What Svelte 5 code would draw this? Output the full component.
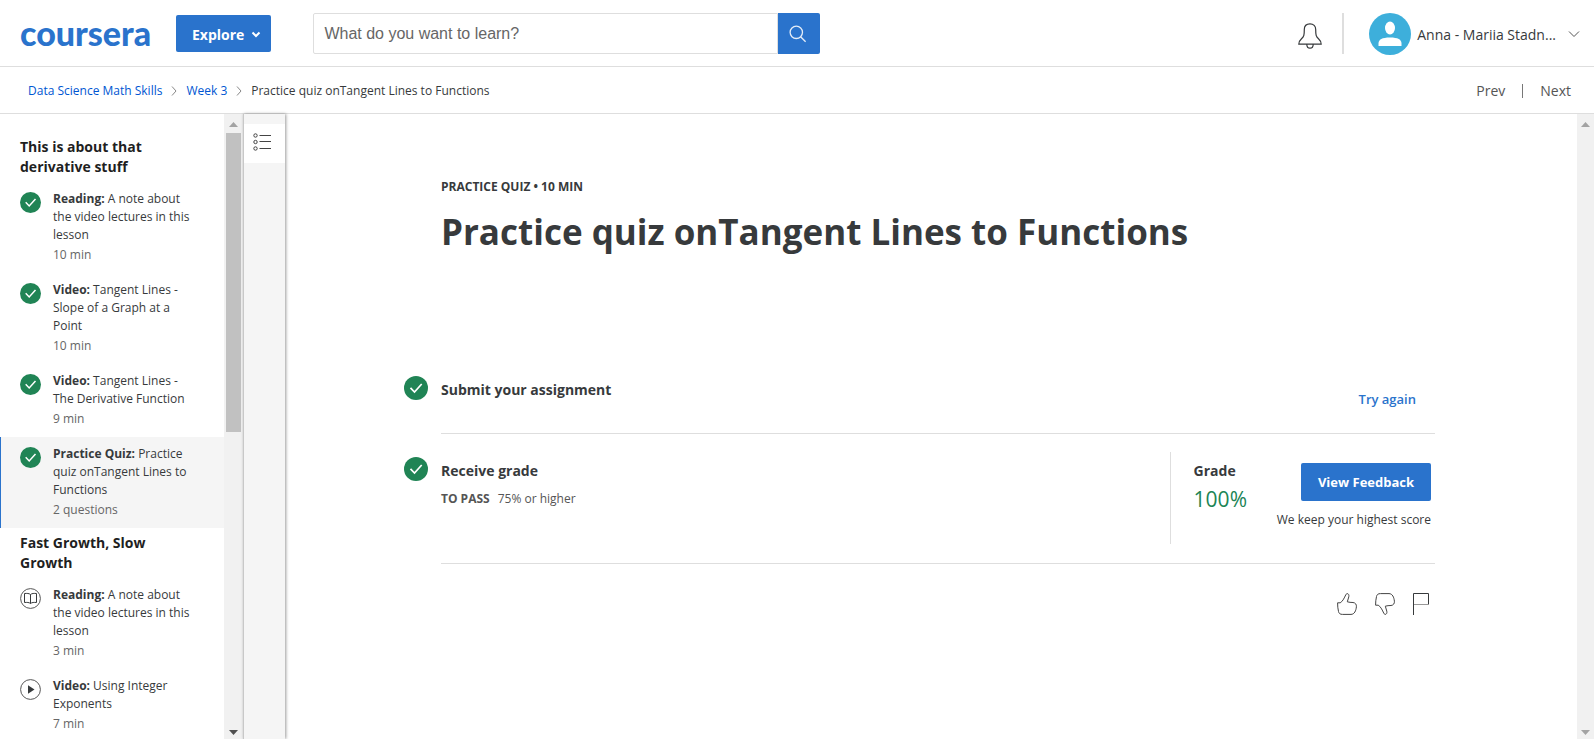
<script>
  const sections = [
    {
      title: 'This is about that derivative stuff',
      items: [
        { kind: 'Reading:', name: 'A note about the video lectures in this lesson', meta: '10 min', icon: 'done' },
        { kind: 'Video:', name: 'Tangent Lines - Slope of a Graph at a Point', meta: '10 min', icon: 'done' },
        { kind: 'Video:', name: 'Tangent Lines - The Derivative Function', meta: '9 min', icon: 'done' },
        { kind: 'Practice Quiz:', name: 'Practice quiz onTangent Lines to Functions', meta: '2 questions', icon: 'done', active: true }
      ]
    },
    {
      title: 'Fast Growth, Slow Growth',
      items: [
        { kind: 'Reading:', name: 'A note about the video lectures in this lesson', meta: '3 min', icon: 'book' },
        { kind: 'Video:', name: 'Using Integer Exponents', meta: '7 min', icon: 'play' }
      ]
    }
  ];
</script>

{#snippet check(size)}
  <svg class="check" width={size} height={size} viewBox="0 0 24 24" aria-hidden="true">
    <circle cx="12" cy="12" r="12" fill="#208455" />
    <path d="M6.5 11.8l4 4.2 7.2-8" fill="none" stroke="#fff" stroke-width="1.7" />
  </svg>
{/snippet}

<div class="page">
  <header class="top">
    <a class="logo" href="#home">coursera</a>
    <button class="explore">Explore
      <svg width="10" height="7" viewBox="0 0 10 7" aria-hidden="true"><path d="M1.5 1.5L5 5l3.5-3.5" fill="none" stroke="#fff" stroke-width="2" /></svg>
    </button>
    <form class="search" role="search">
      <input type="text" aria-label="Search" placeholder="What do you want to learn?" />
      <button type="button" aria-label="Submit search">
        <svg width="18" height="18" viewBox="0 0 18 18" aria-hidden="true"><g fill="none" stroke="#e4edf8" stroke-width="1.3"><circle cx="7.3" cy="7.3" r="6.2" /><path d="M11.6 11.8l5 5" /></g></svg>
      </button>
    </form>
    <div class="account">
      <button class="plain bell" aria-label="Notifications">
        <svg width="24" height="26" viewBox="0 0 24 26" aria-hidden="true"><path d="M12 .8C8.500.8 6.300 3 6.300 6.500C6.300 12 6 13.500 3.500 15.800C1.500 17.600.8 19 .8 21.200H23.200C23.200 19 22.500 17.600 20.500 15.800C18 13.500 17.700 12 17.700 6.500C17.700 3 15.500.8 12 .8ZM8.800 21.200C8.800 26.500 15.200 26.500 15.200 21.200" fill="none" stroke="#373a3c" stroke-width="1.2" /></svg>
      </button>
      <button class="plain user">
        <svg width="42" height="42" viewBox="0 0 42 42" aria-hidden="true"><circle cx="21" cy="21" r="21" fill="#3dafdb" /><ellipse cx="21" cy="15" rx="5" ry="6.500" fill="#fff" /><path d="M9.500 33V30.500C9.500 26.500 13 24.500 21 24.500S32.500 26.500 32.500 30.500V33Z" fill="#fff" /></svg>
        <span>Anna - Mariia Stadn...</span>
        <svg width="12" height="8" viewBox="0 0 12 8" aria-hidden="true"><path d="M1 1.500l5 5 5-5" fill="none" stroke="#555" /></svg>
      </button>
    </div>
  </header>

  <div class="crumbs">
    <nav aria-label="Breadcrumb">
      <a href="#course">Data Science Math Skills</a>
      <svg width="6" height="10" viewBox="0 0 6 10" aria-hidden="true"><path d="M1 .5L5 5 1 9.500" fill="none" stroke="#888" /></svg>
      <a href="#week">Week 3</a>
      <svg width="6" height="10" viewBox="0 0 6 10" aria-hidden="true"><path d="M1 .5L5 5 1 9.500" fill="none" stroke="#888" /></svg>
      <span>Practice quiz onTangent Lines to Functions</span>
    </nav>
    <div class="pager"><a href="#prev">Prev</a><i></i><a href="#next">Next</a></div>
  </div>

  <div class="body">
    <aside>
      {#each sections as section}
        <h2>{section.title}</h2>
        <ul>
          {#each section.items as item}
            <li class:active={item.active}>
              <a href="#item">
                {#if item.icon === 'done'}
                  {@render check(21)}
                {:else}
                  <svg class="check" width="21" height="21" viewBox="0 0 21 21" aria-hidden="true">
                    <circle cx="10.500" cy="10.500" r="9.900" fill="#fff" stroke="#555" />
                    {#if item.icon === 'book'}
                      <path d="M10.500 6.500C9 5.300 7 5.300 4.500 5.500V14.500C7 14.300 9 14.300 10.500 15.500C12 14.300 14 14.300 16.500 14.500V5.500C14 5.300 12 5.300 10.500 6.500V15.500" fill="none" stroke="#373a3c" />
                    {:else}
                      <path d="M8 6.300V14.700L14.500 10.500Z" fill="#373a3c" />
                    {/if}
                  </svg>
                {/if}
                <div>
                  <p><b>{item.kind}</b> {item.name}</p>
                  <p class="meta">{item.meta}</p>
                </div>
              </a>
            </li>
          {/each}
        </ul>
      {/each}
    </aside>
    <div class="bar side" aria-hidden="true">
      <svg width="9" height="5" viewBox="0 0 9 5"><path d="M0 5L4.500 0 9 5Z" fill="#a3a3a3" /></svg>
      <div class="track"><div class="thumb"></div></div>
      <svg width="9" height="5" viewBox="0 0 9 5"><path d="M0 0L4.500 5 9 0Z" fill="#505050" /></svg>
    </div>
    <div class="rail">
      <button class="plain" aria-label="Toggle outline">
        <svg width="18" height="18" viewBox="0 0 18 18" aria-hidden="true"><g fill="none" stroke="#444"><circle cx="2.500" cy="2.500" r="1.700" /><circle cx="2.500" cy="9" r="1.700" /><circle cx="2.500" cy="15.500" r="1.700" /><path d="M6.500 2.500H18M6.500 8.500H18M6.500 15.500H18" /></g></svg>
      </button>
    </div>
    <main>
      <p class="kicker">PRACTICE QUIZ • 10 MIN</p>
      <h1>Practice quiz onTangent Lines to Functions</h1>
      <section class="step">
        {@render check(24)}
        <div class="cell submit">
          <h3>Submit your assignment</h3>
          <button class="plain again">Try again</button>
        </div>
      </section>
      <section class="step second">
        {@render check(24)}
        <div class="cell receive">
          <div class="info">
            <h3>Receive grade</h3>
            <p class="pass"><b>TO PASS</b><span>75% or higher</span></p>
          </div>
          <div class="grade">
            <div class="info">
              <h3>Grade</h3>
              <p class="score">100%</p>
            </div>
            <div class="feedback">
              <button>View Feedback</button>
              <p>We keep your highest score</p>
            </div>
          </div>
        </div>
      </section>
      <div class="actions">
        <button class="plain" aria-label="Like"><svg width="20" height="22" viewBox="0 0 20 22" aria-hidden="true"><path d="M.6 9.800H3.200C5.500 8.500 7 5.500 8.200 3C9 1.200 9.500.6 10.200.6C11.500.6 12.200 2 11.800 3.800L10.300 8.800C12 9.500 14 9.300 16 9.500C18.500 9.800 19.600 11.500 19.400 13.800C19 17.500 17.500 21.400 14 21.400H5.500C3 21.400 2 20.500 1.500 18.500C.8 15.500.6 13 .6 9.800Z" fill="none" stroke="#444" /></svg></button>
        <button class="plain" aria-label="Dislike"><svg width="20" height="22" viewBox="0 0 20 22" aria-hidden="true"><path d="M.6 12.200H3.200C5.500 13.500 7 16.500 8.200 19C9 20.800 9.500 21.400 10.200 21.400C11.500 21.400 12.200 20 11.800 18.200L10.300 13.200C12 12.500 14 12.700 16 12.500C18.500 12.200 19.600 10.500 19.400 8.200C19 4.500 17.500.6 14 .6H5.500C3 .6 2 1.500 1.500 3.500C.8 6.500.6 9 .6 12.200Z" fill="none" stroke="#444" /></svg></button>
        <button class="plain" aria-label="Flag"><svg width="16" height="22" viewBox="0 0 16 22" aria-hidden="true"><path d="M.5 22V.5H15.500V11.500" fill="none" stroke="#373a3c" /><path d="M1 11.500H16" stroke="#999" /></svg></button>
      </div>
    </main>
    <div class="bar" aria-hidden="true">
      <svg width="9" height="5" viewBox="0 0 9 5"><path d="M0 5L4.500 0 9 5Z" fill="#a3a3a3" /></svg>
      <div class="track"></div>
      <svg width="9" height="5" viewBox="0 0 9 5"><path d="M0 0L4.500 5 9 0Z" fill="#a3a3a3" /></svg>
    </div>
  </div>
</div>

<style>
  :global(body) { margin: 0; background: #fff; }
  * { box-sizing: border-box; }
  h1, h2, h3, p, ul { margin: 0; padding: 0; }
  ul { list-style: none; }
  a { color: inherit; text-decoration: none; }
  svg { flex: none; display: block; }
  button { font: inherit; border: 0; cursor: pointer; }
  .plain { background: none; padding: 0; color: inherit; }
  .page { height: 100vh; display: flex; flex-direction: column; font-family: "Open Sans", "Noto Sans", sans-serif; font-size: 12px; line-height: 18px; color: #373a3c; overflow: hidden; }
  .top { flex: none; height: 67px; border-bottom: 1px solid #dedede; display: flex; align-items: center; padding: 1px 14px 0 20px; }
  .logo { width: 132px; margin-right: 24px; padding-bottom: 2px; color: #2a73cc; font: 900 34px/40px Lato, sans-serif; }
  .explore { height: 37px; padding: 2px 10px 0 16px; display: flex; align-items: center; gap: 7px; background: #2a73cc; color: #fff; border-radius: 2px; font-size: 14px; font-weight: 700; }
  .search { display: flex; width: 507px; height: 41px; margin-left: 42px; }
  .search input { flex: 1; min-width: 0; border: 1px solid #dedede; border-radius: 2px 0 0 2px; padding: 0 10px; font: 16px "Liberation Sans", sans-serif; }
  .search input::placeholder { color: #666; opacity: 1; }
  .search button { width: 42px; padding: 0 0 0 11px; background: #2a73cc; border-radius: 0 2px 2px 0; }
  .account { margin-left: auto; display: flex; align-items: center; }
  .bell { padding: 5px 20px 0 0; }
  .user { display: flex; align-items: center; border-left: 2px solid #dedede; padding-left: 25px; font-size: 14px; height: 41px; }
  .user span { margin: 0 12px 0 6px; padding-top: 2px; }
  .crumbs { flex: none; height: 47px; border-bottom: 1px solid #dedede; display: flex; justify-content: space-between; align-items: center; padding: 1px 23px 0 28px; }
  nav { display: flex; align-items: center; gap: 9px; }
  nav a { color: #0056d2; }
  .pager { display: flex; align-items: center; font-size: 14px; color: #555; }
  .pager i { width: 1px; height: 14px; background: #777; margin: 0 17px; }
  .body { flex: 1; min-height: 0; display: flex; }
  aside { flex: none; width: 224px; padding-top: 18px; overflow: hidden; }
  h2 { font-size: 14px; line-height: 20px; padding: 5px 40px 5px 20px; color: #1f1f1f; }
  li a { display: flex; gap: 12px; padding: 8px 28px 9px 20px; }
  li :global(.check) { margin-top: 2px; }
  li.active { background: #f5f5f5; box-shadow: inset 1px 0 #2a73cc; }
  .meta { margin-top: 2px; color: #666; }
  .bar { flex: none; width: 17px; background: #f1f1f1; display: flex; flex-direction: column; align-items: center; padding: 8px 0 4px; }
  .side { width: 19px; }
  .track { flex: 1; width: 15px; padding-top: 6px; }
  .thumb { height: 50%; background: #c1c1c1; }
  .rail { flex: none; width: 42px; background: #f5f5f5; border-left: 1px solid #c8c8c8; padding-top: 10px; box-shadow: 1px 0 3px rgba(0, 0, 0, .4); }
  .rail button { width: 100%; height: 39px; background: #fff; padding: 0 0 4px 9px; }
  main { flex: 1; min-width: 0; padding: 64px 142px 0 119px; }
  .kicker { margin-left: 37px; font-size: 12px; font-weight: 700; }
  h1 { margin: 12px 0 114px 37px; font-size: 35px; line-height: 48px; }
  .step { display: flex; gap: 13px; }
  .step > :global(.check) { margin-top: 6px; }
  .second > :global(.check) { margin-top: 23px; }
  .cell { flex: 1; display: flex; justify-content: space-between; border-bottom: 1px solid #dedede; }
  h3 { font-size: 14px; line-height: 20px; }
  .submit { height: 64px; padding: 10px 19px 0 0; align-items: flex-start; }
  .again { margin-top: 10px; color: #2a73cc; font-size: 13px; font-weight: 600; }
  .receive { padding: 18px 4px 19px 0; height: 130px; }
  .info { padding-top: 9px; }
  .pass { display: flex; gap: 8px; margin-top: 9px; color: #555; }
  .grade { display: flex; gap: 24px; border-left: 1px solid #dedede; padding-left: 23px; height: 92px; }
  .score { font-size: 21px; line-height: 28px; margin-top: 4px; color: #208455; }
  .feedback { min-width: 160px; display: flex; flex-direction: column; align-items: flex-end; padding-top: 11px; }
  .feedback button { background: #2a73cc; color: #fff; font-size: 13px; font-weight: 700; height: 38px; width: 130px; border-radius: 2px; }
  .feedback p { margin-top: 10px; }
  .actions { display: flex; justify-content: flex-end; gap: 18px; padding: 29px 6px 0 0; }
</style>
